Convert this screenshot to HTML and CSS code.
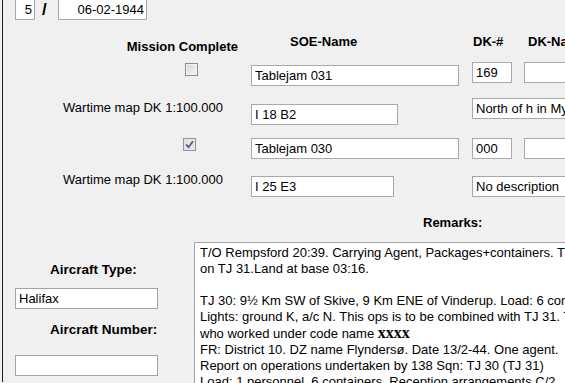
FILE: index.html
```html
<!DOCTYPE html>
<html lang="en">
<head>
    <meta charset="UTF-8">
    <meta name="viewport" content="width=device-width, initial-scale=1.0">
    <title>Operation Tablejam</title>
    <link rel="stylesheet" href="styles.css">
</head>
<body>
    <div class="window">
        <div class="date-row">
            <input class="field num" type="text" value="5">
            <span class="slash">/</span>
            <input class="field date" type="text" value="06-02-1944">
        </div>

        <div class="sites">
            <div class="head mission">Mission Complete</div>
            <div class="head soe">SOE-Name</div>
            <div class="head dknum">DK-#</div>
            <div class="head dkname">DK-Name</div>

            <!-- Tablejam 031 -->
            <span class="check first"></span>
            <input class="field soe-name first" type="text" value="Tablejam 031">
            <input class="field dk-num first" type="text" value="169">
            <input class="field dk-name first" type="text" value="">

            <div class="map-label first">Wartime map DK 1:100.000</div>
            <input class="field map-ref first" type="text" value="I 18 B2">
            <input class="field desc first" type="text" value="North of h in Mygdal">

            <!-- Tablejam 030 -->
            <span class="check second checked">
                <svg width="11" height="11" viewBox="0 0 11 11"><path d="M2 5.5 L4.5 8.2 L9 2.2" fill="none" stroke="#4a5b8c" stroke-width="1.8"/></svg>
            </span>
            <input class="field soe-name second" type="text" value="Tablejam 030">
            <input class="field dk-num second" type="text" value="000">
            <input class="field dk-name second" type="text" value="">

            <div class="map-label second">Wartime map DK 1:100.000</div>
            <input class="field map-ref second narrow" type="text" value="I 25 E3">
            <input class="field desc second" type="text" value="No description">
        </div>

        <div class="bottom">
            <div class="aircraft">
                <div class="aircraft-label type">Aircraft Type:</div>
                <input class="field aircraft-field" type="text" value="Halifax">
                <div class="aircraft-label number">Aircraft Number:</div>
                <input class="field aircraft-field" type="text" value="">
            </div>

            <div class="remarks">
                <div class="remarks-label">Remarks:</div>
                <div class="remarks-box">T/O Rempsford 20:39. Carrying Agent, Packages+containers. TJ 30 completed, went
on TJ 31.Land at base 03:16.

TJ 30: 9½ Km SW of Skive, 9 Km ENE of Vinderup. Load: 6 containers, 1 package.
Lights: ground K, a/c N. This ops is to be combined with TJ 31. The agent dropped
who worked under code name <span class="code-name">xxxx</span>
FR: District 10. DZ name Flyndersø. Date 13/2-44. One agent.
Report on operations undertaken by 138 Sqn: TJ 30 (TJ 31)
Load: 1 personnel, 6 containers. Reception arrangements C/2.</div>
            </div>
        </div>
    </div>
</body>
</html>
```

FILE: styles.css
```css
html, body {
    margin: 0;
    padding: 0;
}

body {
    background-color: #f0f0f0;
    font-family: "Liberation Sans", Arial, sans-serif;
    font-size: 13px;
    line-height: 16px;
    color: #000;
    height: 383px;
    overflow: hidden;
}

.window {
    margin-left: 2px;
    border-left: 1px solid #1d1d1d;
    width: 720px;
    height: 383px;
}

.field {
    box-sizing: border-box;
    display: block;
    height: 21px;
    margin: 0;
    padding: 0 3px;
    border: 1px solid #a9a9a9;
    background-color: #fff;
    font: 13px "Liberation Sans", Arial, sans-serif;
    color: #000;
    outline: none;
}

/* top line: sequence number and date */
.date-row {
    display: flex;
    align-items: flex-start;
    margin-top: -1px;
    padding-left: 12px;
    height: 21px;
}

.date-row .num {
    width: 20px;
    text-align: right;
    padding-right: 2px;
}

.slash {
    width: 16px;
    margin-left: 7px;
    font-size: 17px;
    font-weight: bold;
    line-height: 21px;
}

.date-row .date {
    width: 89px;
    text-align: right;
    padding-right: 2px;
}

/* drop sites grid */
.sites {
    display: grid;
    grid-template-columns: 248px 221px 52px 1fr;
    grid-template-rows: 40px 32px 38px 35px 40px;
    align-items: start;
}

.head {
    font-weight: bold;
    margin-top: 14px;
    white-space: nowrap;
}

.head.mission {
    justify-self: end;
    margin-right: 13px;
    margin-top: 19px;
}

.head.soe {
    padding-left: 39px;
}

.head.dknum {
    padding-left: 1px;
}

.head.dkname {
    padding-left: 4px;
}

.check {
    box-sizing: border-box;
    display: block;
    width: 13px;
    height: 13px;
    justify-self: end;
    margin-right: 54px;
    border: 1px solid #8e8f8f;
    background: linear-gradient(135deg, #d6d6d6, #f6f6f6);
    box-shadow: inset 0 0 0 1px #f2f2f2;
}

.check.first {
    margin-top: 3px;
    margin-right: 53px;
}

.check.second {
    margin-top: 8px;
    margin-right: 55px;
}

.check.checked {
    border-color: #8f96a6;
    background: #e4e4e4;
    box-shadow: none;
}

.check svg {
    display: block;
}

.soe-name {
    width: 208px;
}

.dk-num {
    width: 40px;
}

.dk-name {
    width: 120px;
}

.soe-name.first {
    margin-top: 5px;
}

.dk-num.first, .dk-name.first {
    margin-top: 2px;
}

.soe-name.second, .dk-num.second, .dk-name.second {
    margin-top: 8px;
}

.map-label {
    justify-self: end;
    margin-right: 28px;
    white-space: nowrap;
}

.map-label.first {
    margin-top: 8px;
}

.map-label.second {
    margin-top: 7px;
}

.map-ref {
    width: 147px;
}

.map-ref.narrow {
    width: 143px;
}

.map-ref.first {
    margin-top: 12px;
}

.map-ref.second {
    margin-top: 11px;
}

.desc {
    grid-column: 3 / 5;
    width: 200px;
}

.desc.first {
    margin-top: 6px;
}

.desc.second {
    margin-top: 11px;
}

/* aircraft + remarks */
.bottom {
    display: flex;
    align-items: flex-start;
}

.aircraft {
    width: 191px;
    flex-shrink: 0;
}

.aircraft-label {
    font-weight: bold;
    font-size: 13.5px;
    padding-left: 47px;
    white-space: nowrap;
}

.aircraft-label.type {
    margin-top: 57px;
    margin-bottom: 10px;
}

.aircraft-label.number {
    margin-top: 13px;
    margin-bottom: 17px;
}

.aircraft-field {
    width: 143px;
    margin-left: 12px;
    border-color: #a3a3a3;
}

.remarks {
    flex: 1;
}

.remarks-label {
    font-weight: bold;
    margin-top: 10px;
    margin-left: 229px;
}

.remarks-box {
    margin-top: 11px;
    height: 200px;
    padding: 2px 5px;
    border: 1px solid #a3a3a3;
    background-color: #fff;
    white-space: pre;
    overflow: hidden;
}

.code-name {
    font-family: "Liberation Serif", "Times New Roman", serif;
    font-weight: bold;
    font-size: 16px;
    line-height: 16px;
}
```
